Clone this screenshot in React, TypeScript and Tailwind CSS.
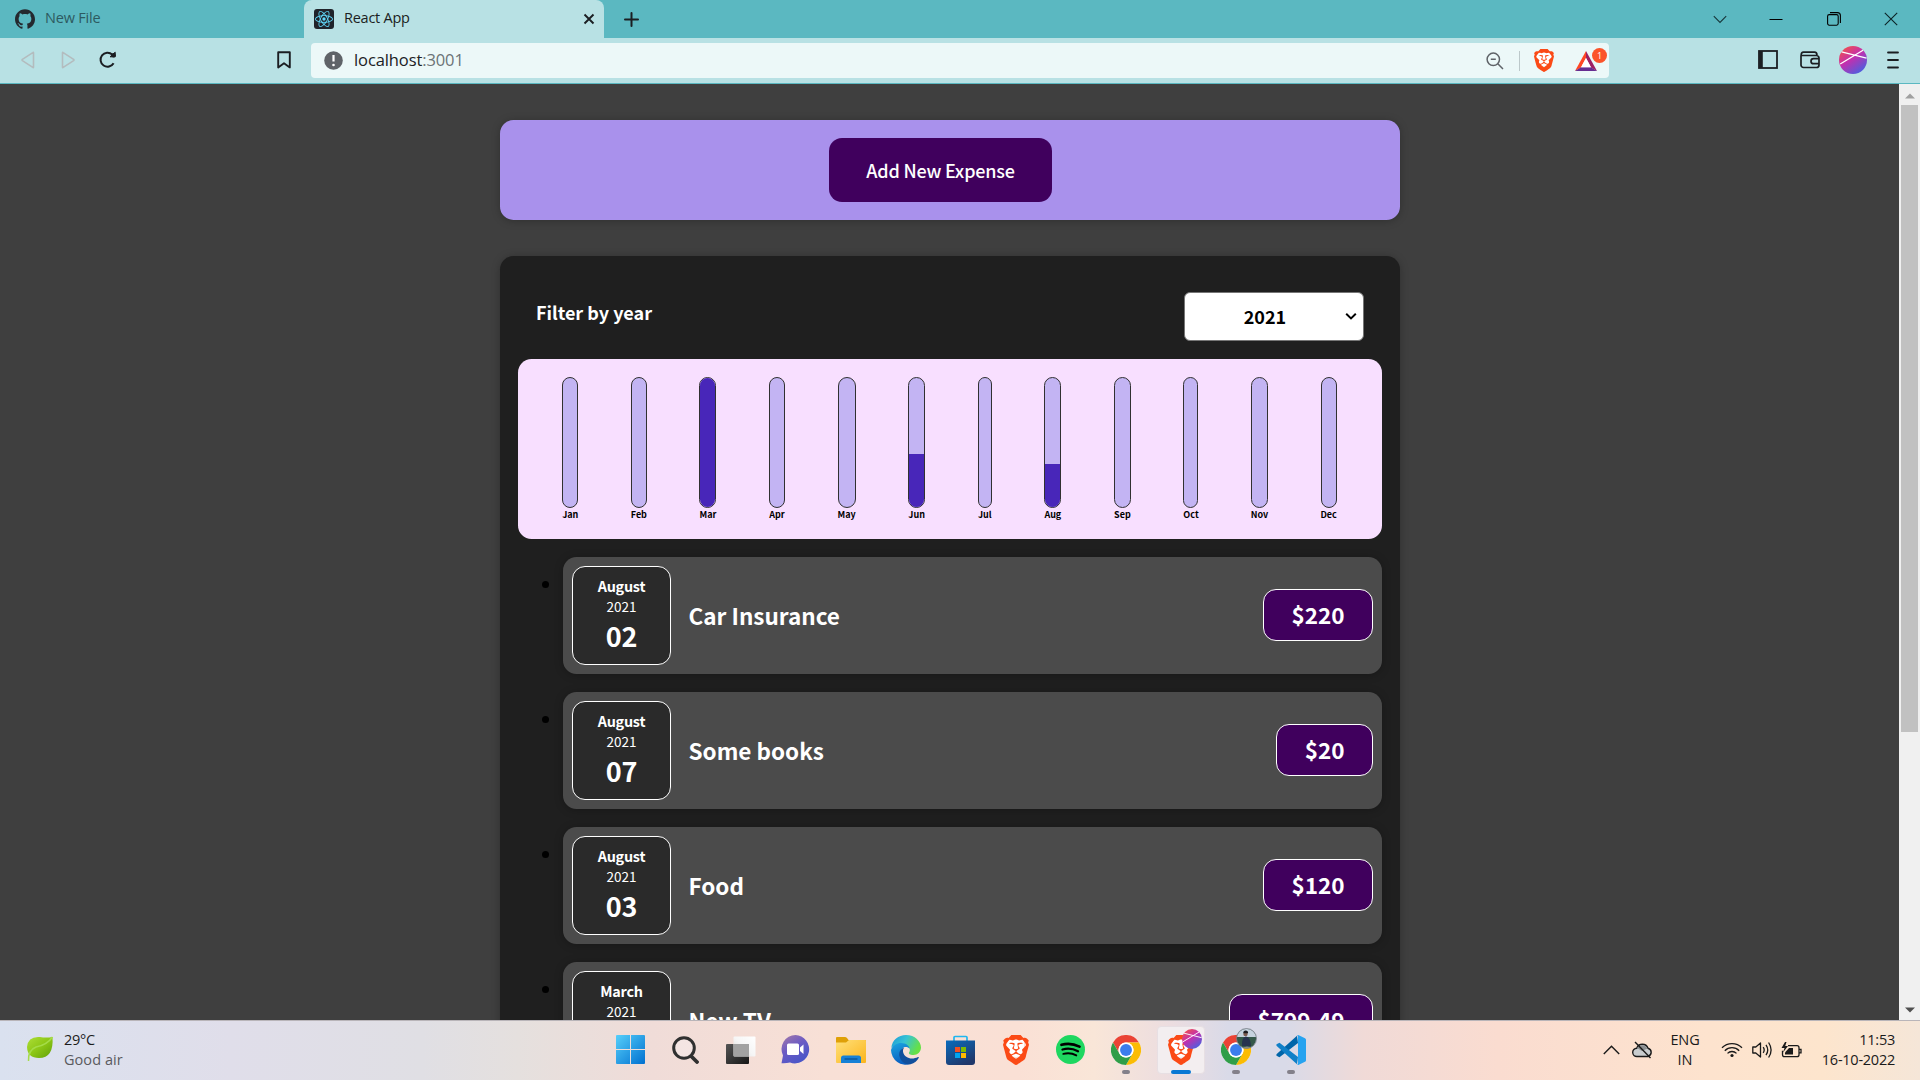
import React from "react";
import { SiBrave, SiGithub, SiReact } from "react-icons/si";

const jp = "font-['Noto_Sans_CJK_JP','Noto_Sans',sans-serif]";

const months = [
  { label: "Jan", width: 16, fill: 0 },
  { label: "Feb", width: 16, fill: 0 },
  { label: "Mar", width: 17, fill: 100 },
  { label: "Apr", width: 16, fill: 0 },
  { label: "May", width: 18, fill: 0 },
  { label: "Jun", width: 17, fill: 41 },
  { label: "Jul", width: 14, fill: 0 },
  { label: "Aug", width: 17, fill: 33 },
  { label: "Sep", width: 17, fill: 0 },
  { label: "Oct", width: 15, fill: 0 },
  { label: "Nov", width: 17, fill: 0 },
  { label: "Dec", width: 16, fill: 0 },
];

const expenses = [
  { month: "August", year: "2021", day: "02", title: "Car Insurance", amount: "$220" },
  { month: "August", year: "2021", day: "07", title: "Some books", amount: "$20" },
  { month: "August", year: "2021", day: "03", title: "Food", amount: "$120" },
  { month: "March", year: "2021", day: "12", title: "New TV", amount: "$799.49" },
];

function BraveLion({ className }: { className: string }) {
  return (
    <span className={`relative block ${className}`}>
      <span className="absolute inset-x-[16%] top-[14%] bottom-[24%] rounded-b-full bg-white" />
      <SiBrave className="relative block h-full w-full text-[#fb4a16]" preserveAspectRatio="none" viewBox="1.8 0 20.4 24" />
    </span>
  );
}

function Planet({ className }: { className: string }) {
  return (
    <svg className={className} viewBox="0 0 28 28">
      <defs>
        <linearGradient id="planet" x1="0.15" y1="0.05" x2="0.8" y2="0.95">
          <stop offset="0" stopColor="#f0504f" />
          <stop offset="0.45" stopColor="#c32fae" />
          <stop offset="1" stopColor="#4a5fe0" />
        </linearGradient>
      </defs>
      <circle cx="14" cy="14" r="14" fill="url(#planet)" />
      <path d="M2.6 5.8 L27.5 12.2 M1.2 18 L24 4.2" stroke="#fff" strokeWidth="1.3" fill="none" />
    </svg>
  );
}

function TabStrip() {
  return (
    <div className="flex h-[38px] bg-[#5bb8c1]">
      <div className="flex w-[304px] items-center pl-[15px]">
        <SiGithub className="h-5 w-5 text-[#24292f]" />
        <span className="mb-[2px] ml-[10px] text-[14.500px] tracking-[-0.2px] text-[#2d5a60]">New File</span>
      </div>
      <div className="flex w-[300px] items-center rounded-t-lg bg-[#b8e1e4] pl-[10px] pr-[9px]">
        <span className="flex h-5 w-5 items-center justify-center rounded-[3px] bg-[#20232a]">
          <SiReact className="h-[18px] w-[18px] text-[#61dafb]" />
        </span>
        <span className="mb-[2px] ml-[10px] text-[14.500px] tracking-[-0.25px] text-[#1b1e22]">React App</span>
        <svg className="ml-auto h-3 w-3" viewBox="0 0 12 12" fill="none" stroke="#1b1e22" strokeWidth="1.9">
          <path d="M1.5 1.5 10.5 10.5M10.5 1.5 1.5 10.5" />
        </svg>
      </div>
      <div className="flex flex-1 items-center pl-5">
        <svg className="h-[15px] w-[15px]" viewBox="0 0 15 15" fill="none" stroke="#1b1e22" strokeWidth="2" strokeLinecap="round">
          <path d="M7.5 1v13M1 7.5h13" />
        </svg>
      </div>
      <div className="flex items-center pb-px pr-[22px]">
        <svg className="h-[14px] w-[14px]" viewBox="0 0 14 14" fill="none" stroke="#17363a" strokeWidth="1.1">
          <path d="M.8 4.2 7 10.4 13.2 4.2" />
        </svg>
        <svg className="ml-[42px] h-[14px] w-[14px]" viewBox="0 0 14 14" stroke="#000" strokeWidth="1">
          <path d="M.5 7.5h13" />
        </svg>
        <svg className="ml-[44px] h-[14px] w-[14px]" viewBox="0 0 14 14" fill="none" stroke="#000" strokeWidth="1.1">
          <rect x=".6" y="2.6" width="10.6" height="10.6" rx="1.6" />
          <path d="M3 .6h7.4a3 3 0 0 1 3 3V11" />
        </svg>
        <svg className="ml-[43px] h-[14px] w-[14px]" viewBox="0 0 14 14" fill="none" stroke="#0c2326" strokeWidth="1.1">
          <path d="M.8.8 13.2 13.2M13.2.8.8 13.2" />
        </svg>
      </div>
    </div>
  );
}

function Toolbar() {
  return (
    <div className="flex h-[46px] items-center border-b border-[#5bb8c1] bg-[#b8e1e4] pl-[21px] pr-[21px]">
      <svg className="mb-[2px] h-[18px] w-[14px]" viewBox="0 0 14 18" fill="none" stroke="#b3bcbe" strokeWidth="1.6" strokeLinejoin="round">
        <path d="M12.5 1.8v14.4q0 .8-.7.2L1.4 9.6q-.7-.6 0-1.2L11.800 1.600q.7-.6.7.2Z" />
      </svg>
      <svg className="mb-[2px] ml-[26px] h-[18px] w-[14px]" viewBox="0 0 14 18" fill="none" stroke="#b3bcbe" strokeWidth="1.6" strokeLinejoin="round">
        <path d="M1.500 1.800v14.400q0 .8.7.2L12.600 9.600q.7-.6 0-1.200L2.200 1.600q-.7-.6-.7.2Z" />
      </svg>
      <svg className="mb-[2px] ml-[24px] h-[18px] w-[18px]" viewBox="0 0 18 18" fill="none" stroke="#1b1e22" strokeWidth="2">
        <path d="M14.600 12.300A7 7 0 1 1 13.200 3.500" />
        <path d="M11 5.800h5.200V1.200Z" fill="#1b1e22" strokeLinejoin="round" strokeWidth="1" />
        <circle cx="14.600" cy="4.200" r="2.200" fill="#1b1e22" stroke="none" />
      </svg>
      <svg className="mb-[2px] ml-[160px] h-[18px] w-[14px]" viewBox="0 0 14 18" fill="none" stroke="#1b1e22" strokeWidth="1.900" strokeLinejoin="round">
        <path d="M1.200 1.200h11.600v15.200L7 12.200 1.200 16.400Z" />
      </svg>
      <div className="ml-5 flex h-[35px] w-[1298px] items-center rounded-[4px] bg-[#ecf8f8] pl-[13px] pr-[2px]">
        <svg className="h-[19px] w-[19px]" viewBox="0 0 19 19">
          <circle cx="9.500" cy="9.500" r="9.300" fill="#5f6368" />
          <path d="M9.500 4v6.500" stroke="#fff" strokeWidth="2.200" />
          <circle cx="9.500" cy="14" r="1.300" fill="#fff" />
        </svg>
        <span className="ml-[11px] text-[16.500px] tracking-[-0.1px] text-[#202124]">
          localhost<span className="text-[#6b7376]">:3001</span>
        </span>
        <svg className="ml-auto h-[18px] w-[18px]" viewBox="0 0 18 18" fill="none" stroke="#5f6368" strokeWidth="1.500">
          <circle cx="7.300" cy="7.300" r="6.200" />
          <path d="M11.800 11.800 17 17M4.800 7.300h5" />
        </svg>
        <span className="ml-[15px] h-5 w-px bg-[#bcc8ca]" />
        <BraveLion className="ml-[14px] h-[23px] w-[20px]" />
        <span className="relative ml-[21px] block h-[23px] w-[32px]">
          <svg className="absolute left-0 top-[2px] h-[20px] w-[22px]" viewBox="0 0 22 20">
            <path d="M11 0 0 20 6 16.500 11 7Z" fill="#ff4724" />
            <path d="M11 0 22 20 16 16.500 11 7Z" fill="#9e1f63" />
            <path d="M0 20h22l-6-3.800H6Z" fill="#662d91" />
            <path d="M11 7 6 16.300h10Z" fill="#fff" />
          </svg>
          <span className="absolute right-0 top-[-1px] flex h-[15px] w-[15px] items-center justify-center rounded-full bg-[#fb542b] text-[9px] text-white">1</span>
        </span>
      </div>
      <svg className="mb-[2px] ml-auto h-[19px] w-5" viewBox="0 0 20 19" fill="none" stroke="#1b1e22" strokeWidth="1.800">
        <rect x="1" y="1" width="18" height="17" />
        <path d="M3 1v17" strokeWidth="3.600" />
      </svg>
      <svg className="mb-[2px] ml-[22px] h-[18px] w-5" viewBox="0 0 20 18" fill="none" stroke="#1b1e22" strokeWidth="1.700">
        <path d="M1 4.500V14a2.500 2.500 0 0 0 2.500 2.500h13A2.500 2.500 0 0 0 19 14V7a2.500 2.500 0 0 0-2.500-2.500H1.200Q1 1.200 3.500 1.200h11q2.500 0 2.500 3.200M19.500 7.700h-6a2.500 2.500 0 0 0 0 5h6" />
      </svg>
      <Planet className="mb-[2px] ml-[19px] h-7 w-7" />
      <svg className="mb-[2px] ml-5 h-[18px] w-[12px]" viewBox="0 0 12 18" stroke="#1b1e22" strokeWidth="1.800" strokeLinecap="round">
        <path d="M1 1.500h10M1 9h10M1 16.500h10" />
      </svg>
    </div>
  );
}

function Chart() {
  return (
    <div className="flex h-[180px] justify-around rounded-[13.500px] bg-[#f8dfff] py-[18px] pl-[18px] pr-[19px]">
      {months.map((m) => (
        <div key={m.label} className="flex flex-col items-center" style={{ width: m.width }}>
          <div className="flex h-[131px] w-full flex-col justify-end overflow-hidden rounded-[13px] border border-[#313131] bg-[#c3b4f3]">
            <div className="bg-[#4826b9]" style={{ height: `${m.fill}%` }} />
          </div>
          <span className="whitespace-nowrap text-[9px] font-bold leading-[13px] text-black">{m.label}</span>
        </div>
      ))}
    </div>
  );
}

function Page() {
  return (
    <div className={`flex-1 overflow-hidden bg-[#3f3f3f] pt-9 ${jp}`}>
      <div className="ml-[500px] flex h-[100px] w-[900px] items-center justify-center rounded-[13.500px] bg-[#a991ec] pr-[19px] shadow-[0_1px_8px_rgba(0,0,0,0.250)]">
        <button className="h-16 w-[223px] rounded-[13px] bg-[#40005d] pt-px text-[18px] font-medium tracking-[-0.2px] text-white">Add New Expense</button>
      </div>
      <div className="ml-[500px] mt-9 w-[900px] rounded-[13.500px] bg-[#1f1f1f] p-[18px] shadow-[0_1px_8px_rgba(0,0,0,0.250)]">
        <div className="flex items-start justify-between px-[18px] pt-[18px]">
          <label className="mt-[5px] text-[18px] font-bold leading-[30px] text-white">Filter by year</label>
          <div className="flex h-[49px] w-[180px] items-center rounded-[6px] border border-[#767676] bg-white pr-[6px]">
            <span className="flex-1 text-center text-[18px] font-bold text-black">2021</span>
            <svg className="mb-[2px] h-[12px] w-[12px]" viewBox="0 0 12 12" fill="none" stroke="#000" strokeWidth="2">
              <path d="M1.200 3.800 6 8.400 10.800 3.800" />
            </svg>
          </div>
        </div>
        <div className="mt-[18px]">
          <Chart />
        </div>
        <ul>
          {expenses.map((e) => (
            <li key={e.title} className="mt-[18px] flex">
              <span className="ml-6 mr-[14px] mt-[24px] h-[7px] w-[7px] rounded-full bg-black" />
              <div className="flex h-[117px] flex-1 items-center rounded-[13.500px] bg-[#4b4b4b] px-[9px] shadow-[0_1px_8px_rgba(0,0,0,0.250)]">
                <div className="flex h-[99px] w-[99px] flex-col items-center rounded-[13px] border border-white bg-[#2a2a2a] pt-[9px] text-white">
                  <span className="text-[14.400px] font-bold leading-5 tracking-[-0.250px]">{e.month}</span>
                  <span className="text-[13.500px] leading-5">{e.year}</span>
                  <span className="text-[27px] font-bold leading-10 tracking-[-0.2px]">{e.day}</span>
                </div>
                <h2 className="ml-[17.500px] flex-1 text-[22.500px] font-bold text-white">{e.title}</h2>
                <div className="mb-px flex h-[52px] items-center rounded-[13px] border border-white bg-[#40005d] px-[27.500px] text-[22.500px] font-bold text-white">{e.amount}</div>
              </div>
            </li>
          ))}
        </ul>
      </div>
    </div>
  );
}

function Scrollbar() {
  return (
    <div className="flex w-[21px] flex-col items-center bg-[#f0f0f0]">
      <svg className="mt-[9px] h-[6px] w-[10px]" viewBox="0 0 10 6"><path d="M0 5.500 5 .5l5 5Z" fill="#a0a0a0" /></svg>
      <div className="mt-[6px] h-[627px] w-[17px] bg-[#c1c1c1]" />
      <svg className="mb-[7px] mt-auto h-[6px] w-[10px]" viewBox="0 0 10 6"><path d="M0 .5 5 5.500l5-5Z" fill="#505050" /></svg>
    </div>
  );
}

function ChromeLogo() {
  return (
    <svg className="h-[30px] w-[30px]" viewBox="0 0 48 48">
      <circle cx="24" cy="24" r="24" fill="#fff" />
      <path d="M3.200 12A24 24 0 0 1 44.800 12H24A12 12 0 0 0 13.600 30Z" fill="#ea4335" />
      <path d="M44.800 12A24 24 0 0 1 24 48L34.400 30A12 12 0 0 0 24 12Z" fill="#fbbc04" />
      <path d="M24 48A24 24 0 0 1 3.200 12L13.600 30A12 12 0 0 0 34.400 30Z" fill="#2f9e48" />
      <circle cx="24" cy="24" r="12" fill="#fff" />
      <circle cx="24" cy="24" r="9.500" fill="#3b7ded" />
    </svg>
  );
}

function Cell({ children, mark }: { children: React.ReactNode; mark?: boolean }) {
  return (
    <div className="relative flex h-full w-[55px] items-center justify-center pb-[2px]">
      {children}
      {mark && <span className="absolute bottom-[6px] left-[24px] h-[4px] w-2 rounded-full bg-[#83808a]" />}
    </div>
  );
}

function TaskIcons() {
  return (
    <div className="flex h-full">
      <Cell>
        <svg className="h-[29px] w-[29px]" viewBox="0 0 29 29">
          <defs>
            <linearGradient id="win" x1="0" y1="0" x2="29" y2="29" gradientUnits="userSpaceOnUse">
              <stop stopColor="#56cffa" /><stop offset="1" stopColor="#0070d0" />
            </linearGradient>
          </defs>
          <path d="M1 0h13v14H0V1Q0 0 1 0ZM15 0h13q1 0 1 1v13H15ZM0 15h14v14H1q-1 0-1-1ZM15 15h14v13q0 1-1 1H15Z" fill="url(#win)" />
        </svg>
      </Cell>
      <Cell>
        <svg className="h-[28px] w-[27px]" viewBox="0 0 27 28" fill="none" stroke="#303030" strokeLinecap="round">
          <circle cx="12" cy="12" r="10.300" strokeWidth="3" fill="#f8eeee" fillOpacity=".5" />
          <path d="M19.500 20.500 25 26" strokeWidth="3.800" />
        </svg>
      </Cell>
      <Cell>
        <svg className="h-[30px] w-[30px]" viewBox="0 0 30 30">
          <defs>
            <linearGradient id="tv" x1="0" y1="0" x2="1" y2="1"><stop stopColor="#555" /><stop offset="1" stopColor="#161616" /></linearGradient>
            <linearGradient id="tv2" x1="0" y1="1" x2="1" y2="0"><stop stopColor="#ddd" /><stop offset=".5" stopColor="#f6f6f6" /><stop offset="1" stopColor="#fff" /></linearGradient>
          </defs>
          <rect x="0" y="9" width="23" height="20" rx="1" fill="url(#tv)" />
          <rect x="7.500" y="1.500" width="22" height="20" rx="1" fill="url(#tv2)" />
          <path d="M7.500 9H23v12.500H8.500q-1 0-1-1Z" fill="#a2a2a2" />
        </svg>
      </Cell>
      <Cell>
        <svg className="h-[29px] w-[29px]" viewBox="0 0 29 29">
          <defs>
            <linearGradient id="chat" x1="0" y1="0" x2=".6" y2="1"><stop stopColor="#a57aa8" /><stop offset=".5" stopColor="#6c5bc4" /><stop offset="1" stopColor="#4a56c8" /></linearGradient>
          </defs>
          <path d="M14.500 0a14.200 14.200 0 1 1-5.500 27.500Q5 28.500.5 28.200L2 20.500A14.200 14.200 0 0 1 14.500 0Z" fill="url(#chat)" />
          <rect x="6" y="8.500" width="12" height="11.500" rx="1.500" fill="#fff" />
          <path d="M19 12.500 22.500 9.500v9.500L19 16Z" fill="#fff" />
        </svg>
      </Cell>
      <Cell>
        <svg className="h-[30px] w-[30px]" viewBox="0 0 30 30">
          <defs><linearGradient id="fold" x1="0" y1="0" x2="1" y2="1"><stop stopColor="#ffe07a" /><stop offset="1" stopColor="#fbb51c" /></linearGradient></defs>
          <path d="M0 3q0-1 1-1h8q1 0 2 1l1.500 2H29q1 0 1 1v7H0Z" fill="#dfa007" />
          <path d="M0 7.500h10L13 5h16q1 0 1 1v21q0 1-1 1H1q-1 0-1-1Z" fill="url(#fold)" />
          <path d="M5 28v-5q0-2.500 2.500-2.500h15Q25 20.500 25 23v5Z" fill="#1681d6" />
          <path d="M8.500 24h13" stroke="#0a4d8f" strokeWidth="1.200" />
        </svg>
      </Cell>
      <Cell>
        <svg className="h-[30px] w-[30px]" viewBox="0 0 30 30">
          <defs>
            <linearGradient id="edgeTop" x1="0" y1="0" x2="1" y2=".4"><stop stopColor="#1a98d8" /><stop offset=".5" stopColor="#38c3d4" /><stop offset="1" stopColor="#66e046" /></linearGradient>
            <linearGradient id="edgeLow" x1="0" y1="0" x2=".3" y2="1"><stop stopColor="#1ba5e0" /><stop offset="1" stopColor="#0a5fc0" /></linearGradient>
          </defs>
          <path d="M.3 13C1 5 7.500 0 15 0c9 0 15 6.500 15 12.500 0 4.500-3.500 7.500-7.500 7.500-4 0-5-1.500-4.500-2.500 1-1.500 1.200-3 .2-4.600C15.500 8 5 7.500.3 13Z" fill="url(#edgeTop)" />
          <path d="M0 15C1.500 10 6 8 10 8c5 0 8.500 3 8.500 5.500C14 10 10 13 10 18c0 6 4.500 10.500 9.500 11A15 15 0 0 1 0 15Z" fill="url(#edgeLow)" />
          <path d="M13 12.700C9 14 7.500 18 8.500 21.500 10 27 15 30 19.500 29.200c4-.8 7-3.700 8.300-6.500.2-.7-.3-.9-.8-.6-7 3.500-13.500.2-14.800-4.600-.5-2 0-3.600.8-4.800Z" fill="#114f9c" />
        </svg>
      </Cell>
      <Cell>
        <svg className="h-[30px] w-[29px]" viewBox="0 0 29 30">
          <defs><linearGradient id="store" x1="0" y1="0" x2=".6" y2="1"><stop stopColor="#0a6cbd" /><stop offset="1" stopColor="#20386b" /></linearGradient></defs>
          <path d="M8 6V2.500Q8 1.500 9 1.500h11q1 0 1 1V6" fill="none" stroke="#20b6f0" strokeWidth="1.700" />
          <path d="M0 5.500h29V27q0 3-3 3H3q-3 0-3-3Z" fill="url(#store)" />
          <path d="M9 12h5v5H9Z" fill="#f25022" /><path d="M15 12h5v5h-5Z" fill="#7fba00" />
          <path d="M9 18h5v5H9Z" fill="#00a4ef" /><path d="M15 18h5v5h-5Z" fill="#ffb900" />
        </svg>
      </Cell>
      <Cell><BraveLion className="h-[30px] w-[26px]" /></Cell>
      <Cell>
        <svg className="h-[29px] w-[29px]" viewBox="0 0 29 29" fill="none" stroke="#000" strokeLinecap="round">
          <circle cx="14.500" cy="14.500" r="14.500" fill="#1ed760" stroke="none" />
          <path d="M5.500 9.800c6-1.700 12-1.200 18 1.800" strokeWidth="2.700" />
          <path d="M6.500 14.500c5.500-1.500 10.500-.9 15.500 1.700" strokeWidth="2.300" />
          <path d="M7.300 18.900c4.500-1.200 9-.7 13 1.500" strokeWidth="1.900" />
        </svg>
      </Cell>
      <Cell mark><ChromeLogo /></Cell>
      <Cell>
        <div className="relative flex h-12 w-12 items-center justify-center rounded-[4px] border border-[#e7dfe3] bg-[#f3eef0]">
          <BraveLion className="h-[30px] w-[26px]" />
          <Planet className="absolute right-[2px] top-[2px] h-5 w-5" />
          <span className="absolute bottom-[-1px] left-[13px] h-[4px] w-5 rounded-full bg-[#0a78d4]" />
        </div>
      </Cell>
      <Cell mark>
        <ChromeLogo />
        <svg className="absolute left-[28px] top-[7px] h-[21px] w-[21px]" viewBox="0 0 21 21">
          <defs><clipPath id="face"><circle cx="10.500" cy="10.500" r="9.800" /></clipPath></defs>
          <g clipPath="url(#face)">
            <path d="M0 0h21v21H0Z" fill="#35594a" />
            <path d="M0 0h21v9H0Z" fill="#c6d3df" />
            <path d="M6 18Q5.500 9 10 8.500 14.500 9 15 18Z" fill="#27334f" />
            <path d="M5 21q6-5 12 0Z" fill="#8b8681" />
            <circle cx="9.500" cy="6" r="2.200" fill="#7d5b50" />
            <path d="M7.200 5.200q0-2.600 2.500-2.600t2.400 2.600Z" fill="#1d1d22" />
          </g>
          <circle cx="10.500" cy="10.500" r="10" fill="none" stroke="#777f88" strokeWidth=".8" />
        </svg>
      </Cell>
      <Cell mark>
        <svg className="h-[30px] w-[30px]" viewBox="0 0 30 30">
          <path d="M22 8 3.500 22.300 1 21q-1.500-1 0-2.300L21 .8Z" fill="#0065a9" />
          <path d="M22 22 3.500 7.700 1 9q-1.500 1 0 2.300L21 29.200Z" fill="#1080c8" />
          <path d="M21 .3q.8-.5 1.800 0L29 3.200q1 .5 1 1.500v20.600q0 1-1 1.500l-6.200 2.900q-1 .5-1.800-.2 1 .2 1-1.500V2Q22 .6 21 .3Z" fill="#26a3f0" />
        </svg>
      </Cell>
    </div>
  );
}

function Taskbar() {
  return (
    <div className="flex h-[60px] border-t border-[#b9b5b9] bg-[linear-gradient(90deg,#dae1ef_0%,#e0deea_12%,#e0dfe4_22%,#e5e0de_27%,#f0dcd8_34%,#f8e0d6_43%,#fae0d5_53%,#f9e6d8_57%,#ecdde0_61%,#d9dae8_64%,#d9dae8_67%,#f0dad7_71%,#fadcd0_78%,#fde3ce_89%,#fde5cd_95%,#f5e6d8_100%)]">
      <div className="flex w-[603px] items-center pb-[2px] pl-[26px]">
        <svg className="mb-px h-[26px] w-[28px]" viewBox="0 0 28 26">
          <defs><linearGradient id="leaf" x1="0" y1="0" x2="1" y2="1"><stop stopColor="#aede38" /><stop offset=".5" stopColor="#8cc716" /><stop offset="1" stopColor="#62a008" /></linearGradient></defs>
          <path d="M26.500 1Q28 22 13 22 1.500 22 1 11 2 0 14 1Q20 2 26.500 1Z" fill="url(#leaf)" />
          <path d="M26.500 1Q21 9 10 11 2 14 2.500 25" fill="none" stroke="#a5dc49" strokeWidth="1.500" />
        </svg>
        <div className="ml-[10px] text-[14.500px] leading-5 tracking-[-0.250px] text-[#1c1c1c]">
          <div>29°C</div>
          <div className="tracking-[0.050px] text-[#5a5a5e]">Good air</div>
        </div>
      </div>
      <TaskIcons />
      <div className="ml-auto flex items-center pb-[2px] pr-[25px] text-[#1a1a1a]">
        <svg className="h-[10px] w-[17px]" viewBox="0 0 17 10" fill="none" stroke="#1a1a1a" strokeWidth="1.400"><path d="M.8 9 8.500 1.200 16.200 9" /></svg>
        <svg className="ml-[12px] h-[18px] w-[21px]" viewBox="0 0 21 18" fill="none" stroke="#1a1a1a" strokeWidth="1.400">
          <path d="M5 15.500a4 4 0 0 1-.3-8.300A6 6 0 0 1 16 7.200a4.300 4.300 0 0 1 0 8.300Z" fill="#c9cdcf" />
          <path d="M5 7a6 6 0 0 1 10.500.5L10 10Z" fill="#8d9092" stroke="none" />
          <path d="M3 1 18.500 17" />
        </svg>
        <div className="ml-[11px] w-[42px] text-center text-[14.500px] leading-5 tracking-[-0.1px]"><div>ENG</div><div>IN</div></div>
        <svg className="ml-[15px] h-[16px] w-[22px]" viewBox="0 0 22 16" fill="none" stroke="#1a1a1a" strokeWidth="1.300">
          <path d="M1 5.800a14 14 0 0 1 20 0M3.800 8.700a10.100 10.100 0 0 1 14.400 0M6.500 11.400a6.300 6.300 0 0 1 9 0" />
          <circle cx="11" cy="13.500" r="1.600" fill="#1a1a1a" stroke="none" />
        </svg>
        <svg className="ml-[9px] h-[18px] w-[20px]" viewBox="0 0 20 18" fill="none" stroke="#1a1a1a" strokeWidth="1.300">
          <path d="M.8 6h3L8.500 2v14L3.800 12h-3Z" strokeLinejoin="round" />
          <path d="M11.200 6.200q2 2.800 0 5.600M14 3.800q3.500 5.200 0 10.400M16.600 1.500q5 7.500 0 15" />
        </svg>
        <svg className="ml-[9px] h-[18px] w-[21px]" viewBox="0 0 21 18" fill="none" stroke="#1a1a1a" strokeWidth="1.300">
          <path d="M7 4.700h9q2 0 2 2v7q0 2-2 2H3.500q-2 0-2-2v-4M18.500 8.300h1.500v3.500h-1.500" />
          <path d="M8 7h4v6.500H4v-2Z" fill="#1a1a1a" stroke="none" />
          <path d="M4 1 .5 7h3L2 11.500 7 5H4.200L5.500 1Z" fill="#1a1a1a" stroke="none" />
        </svg>
        <div className="ml-[18px] w-[75px] whitespace-nowrap text-right text-[14.500px] leading-5 tracking-[-0.250px]"><div>11:53</div><div>16-10-2022</div></div>
      </div>
    </div>
  );
}

export default function App() {
  return (
    <div className="flex h-[1080px] w-[1920px] flex-col overflow-hidden font-['Open_Sans',sans-serif]">
      <TabStrip />
      <Toolbar />
      <div className="flex h-[936px] overflow-hidden">
        <Page />
        <Scrollbar />
      </div>
      <Taskbar />
    </div>
  );
}
